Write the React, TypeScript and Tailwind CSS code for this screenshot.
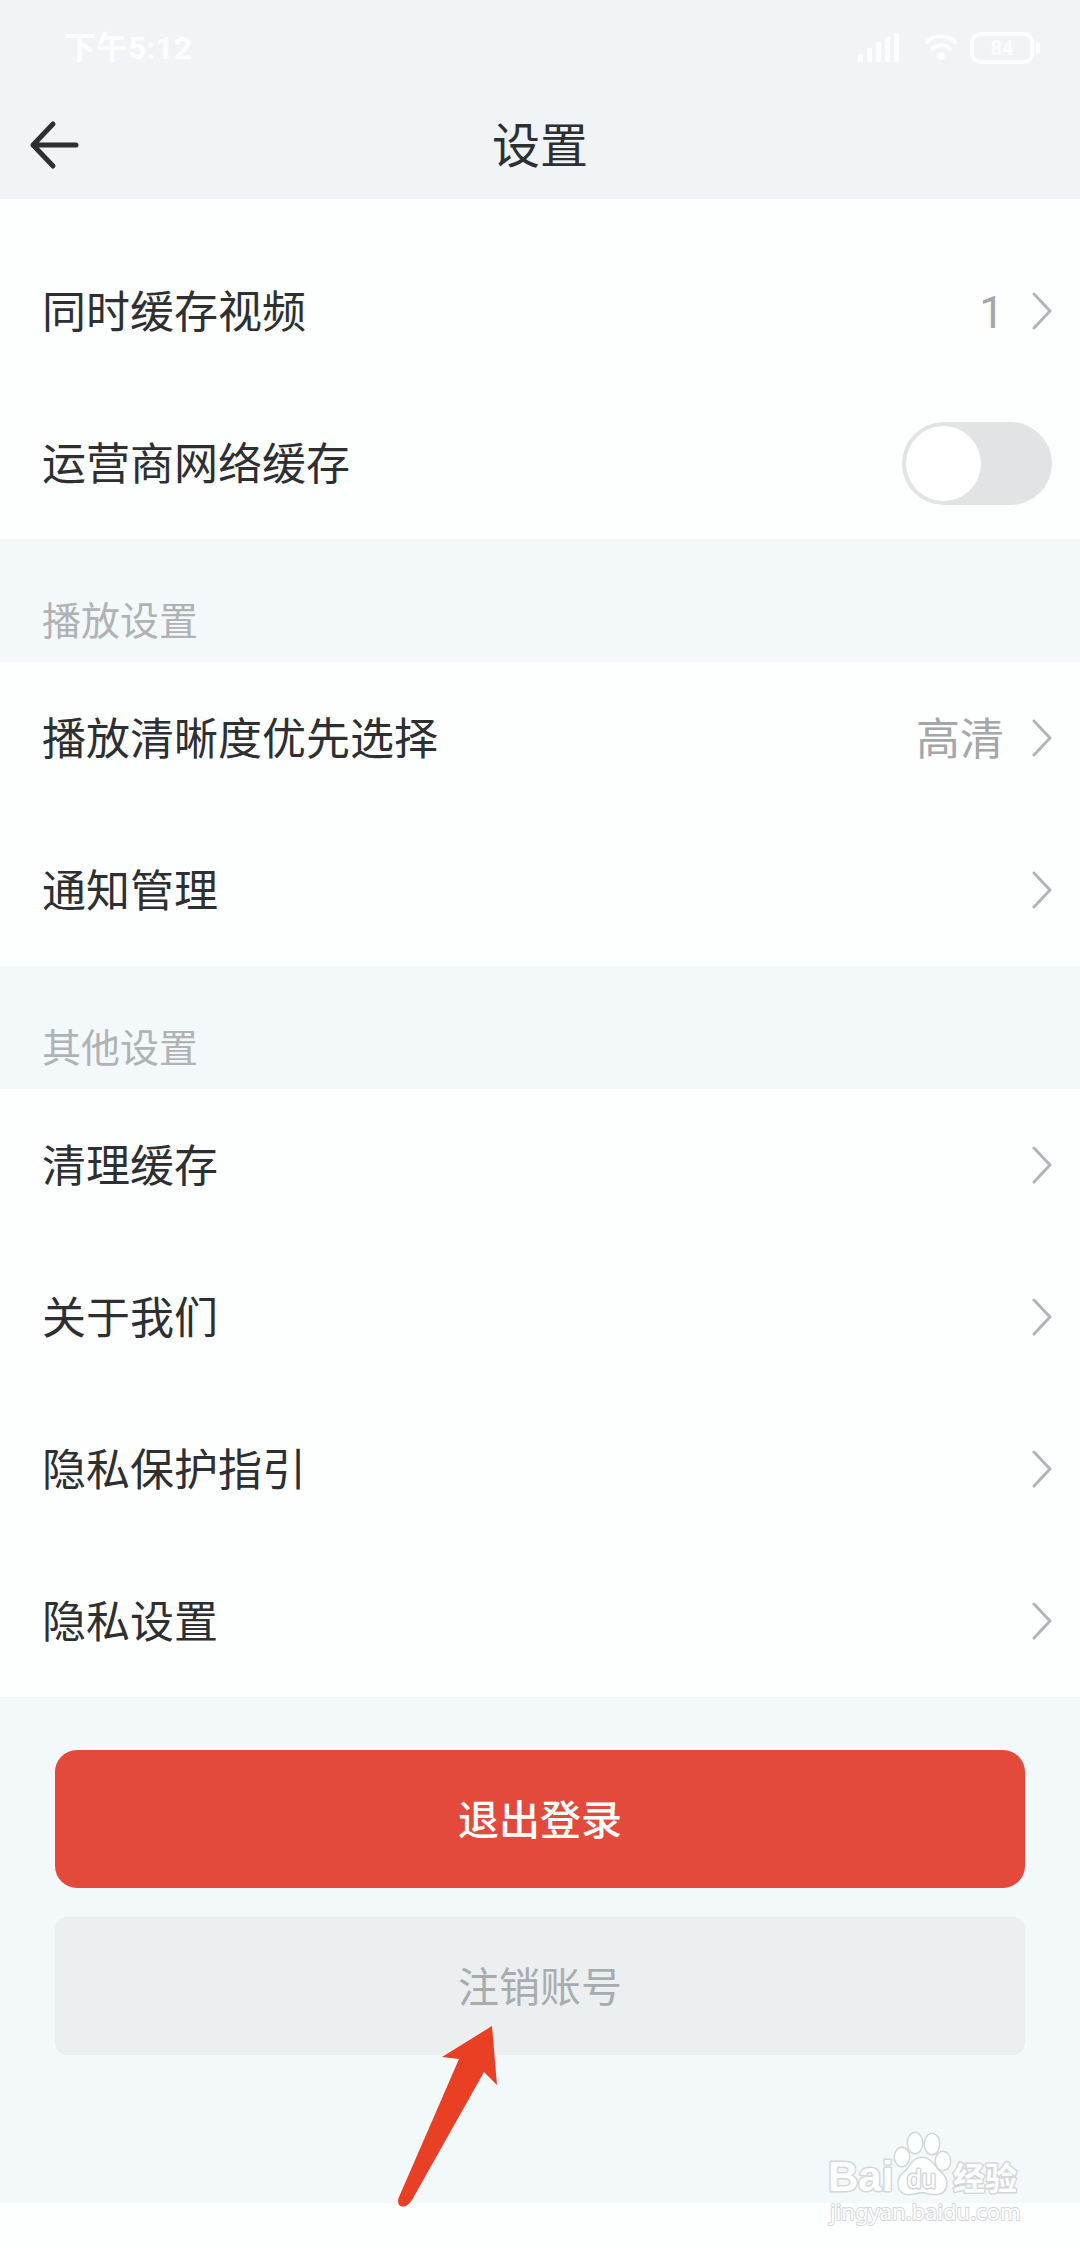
import { useState } from "react";

type Row = { label: string; value?: string };

const PLAYBACK_ROWS: Row[] = [
  { label: "播放清晰度优先选择", value: "高清" },
  { label: "通知管理" },
];

const OTHER_ROWS: Row[] = [
  { label: "清理缓存" },
  { label: "关于我们" },
  { label: "隐私保护指引" },
  { label: "隐私设置" },
];

function StatusBar() {
  return (
    <div className="flex h-24 items-center justify-between pr-10 pl-16 text-white/80">
      <span className="text-[32px] leading-none font-bold">下午5:12</span>
      <div className="flex items-center gap-3">
        <svg
          className="mr-3"
          width="46"
          height="32"
          viewBox="0 0 46 32"
          fill="currentColor"
          aria-hidden="true"
        >
          <rect x="4" y="22" width="5" height="8" rx="1" />
          <rect x="13" y="16" width="5" height="14" rx="1" />
          <rect x="22" y="10" width="5" height="20" rx="1" />
          <rect x="31" y="5" width="5" height="25" rx="1" />
          <rect x="40" y="1" width="5" height="29" rx="1" />
        </svg>
        <svg
          width="34"
          height="32"
          viewBox="0 0 34 32"
          fill="none"
          stroke="currentColor"
          strokeWidth="4"
          strokeLinecap="round"
          aria-hidden="true"
        >
          <path d="M3 10C11 2 23 2 31 10M8 17C13 12 21 12 26 17" />
          <circle cx="17" cy="24" r="2" fill="currentColor" />
        </svg>
        <div className="flex items-center gap-0.5">
          <span className="flex h-8 w-16 items-center justify-center rounded-[10px] border-4 border-white/80 text-xl leading-none font-bold">
            84
          </span>
          <span className="h-3 w-1 rounded-r-sm bg-white/80" />
        </div>
      </div>
    </div>
  );
}

function Chevron() {
  return (
    <svg
      width="20"
      height="38"
      viewBox="0 0 20 38"
      fill="none"
      stroke="#b3b4b7"
      strokeWidth="3"
      strokeLinecap="round"
      aria-hidden="true"
    >
      <path d="M2 2L18 19L2 36" />
    </svg>
  );
}

function SettingRow({ label, value }: Row) {
  return (
    <button
      type="button"
      className="flex h-[152px] w-full items-center justify-between pr-7 pl-[42px] text-left text-[44px] leading-none"
    >
      <span className="pt-1">{label}</span>
      <span className="flex items-center gap-7 text-[#a5a6a8]">
        {value && <span className="pt-1">{value}</span>}
        <Chevron />
      </span>
    </button>
  );
}

function SectionHeader({ children }: { children: string }) {
  return (
    <h2 className="flex h-[123px] items-end bg-[#f3f8fb] px-[42px] pb-5 text-[39px] leading-[40px] text-[#b0b2b4]">
      {children}
    </h2>
  );
}

function Watermark() {
  return (
    <svg
      className="absolute right-[52px] bottom-5"
      width="204"
      height="100"
      viewBox="0 0 204 100"
      fill="#fdfefe"
      stroke="#d3d7d9"
      strokeWidth="3"
      strokeLinejoin="round"
      paintOrder="stroke"
      aria-hidden="true"
    >
      <text x="4" y="63" fontSize="42" fontWeight="700" fontFamily="Liberation Sans, sans-serif">
        Bai
      </text>
      <ellipse cx="78" cy="29" rx="7" ry="9" />
      <ellipse cx="91" cy="15" rx="7" ry="10" />
      <ellipse cx="108" cy="16" rx="7" ry="10" />
      <ellipse cx="119" cy="33" rx="7" ry="9" />
      <path d="M98 30C88 30 87 40 80 45C72 51 73 65 84 66C90 66 93 64 98 64C103 64 106 66 112 66C124 65 125 52 117 45C110 40 108 30 98 30Z" />
      <text x="83" y="60" fontSize="26" fontFamily="Liberation Sans, sans-serif">
        du
      </text>
      <text x="129" y="62" fontSize="32" fontWeight="700" fontFamily="Noto Sans CJK SC, sans-serif">
        经验
      </text>
      <text x="6" y="92" fontSize="22" strokeWidth="2" fontFamily="Noto Sans, sans-serif">
        jingyan.baidu.com
      </text>
    </svg>
  );
}

export default function App() {
  const [carrierCache, setCarrierCache] = useState(false);

  return (
    <div className="relative flex min-h-screen flex-col bg-[#fdfefe] font-[Roboto,'Noto_Sans_CJK_SC',sans-serif] text-[#2d2f32]">
      <header className="h-[199px] bg-[#f0f4f6]">
        <StatusBar />
        <div className="grid h-[97px] grid-cols-3 items-center px-7">
          <button type="button" aria-label="返回" className="justify-self-start">
            <svg
              width="52"
              height="50"
              viewBox="0 0 52 50"
              fill="none"
              stroke="currentColor"
              strokeWidth="5"
              strokeLinecap="round"
              strokeLinejoin="round"
            >
              <path d="M25 4L5 25L25 46M5 25H48" />
            </svg>
          </button>
          <h1 className="pt-1 text-center text-[48px] leading-none">设置</h1>
        </div>
      </header>

      <main className="flex flex-1 flex-col">
        <section className="pt-9">
          <SettingRow label="同时缓存视频" value="1" />
          <label className="flex h-[152px] items-center justify-between pr-7 pl-[42px] text-[44px] leading-none">
            <span className="pt-1">运营商网络缓存</span>
            <input
              type="checkbox"
              role="switch"
              checked={carrierCache}
              onChange={(e) => setCarrierCache(e.target.checked)}
              className="flex h-[83px] w-[150px] appearance-none items-center rounded-full bg-[#e1e4e5] p-1 before:size-[75px] before:rounded-full before:bg-white checked:justify-end checked:bg-[#e24a3b]"
            />
          </label>
        </section>

        <section>
          <SectionHeader>播放设置</SectionHeader>
          {PLAYBACK_ROWS.map((row) => (
            <SettingRow key={row.label} {...row} />
          ))}
        </section>

        <section>
          <SectionHeader>其他设置</SectionHeader>
          {OTHER_ROWS.map((row) => (
            <SettingRow key={row.label} {...row} />
          ))}
        </section>

        <div className="mb-[45px] flex flex-1 flex-col gap-[29px] bg-[#f3f8fb] px-[55px] pt-[53px]">
          <button
            type="button"
            className="h-[138px] rounded-[22px] bg-[#e34a3b] pt-1 text-[41px] leading-none font-medium text-white"
          >
            退出登录
          </button>
          <div className="relative flex flex-col">
            <button
              type="button"
              className="h-[138px] rounded-xl bg-[#ebeff0] pt-1 text-[41px] leading-none text-[#a9acae]"
            >
              注销账号
            </button>
            <svg
              className="pointer-events-none absolute top-[108px] left-[calc(50%-144px)]"
              width="104"
              height="186"
              viewBox="0 0 104 186"
              fill="#e93f25"
              aria-hidden="true"
            >
              <path d="M96 1L101 60L88 47L16 175C9 186 -1 182 3 172L63 34L46 32Z" />
            </svg>
          </div>
        </div>
      </main>

      <Watermark />
    </div>
  );
}
